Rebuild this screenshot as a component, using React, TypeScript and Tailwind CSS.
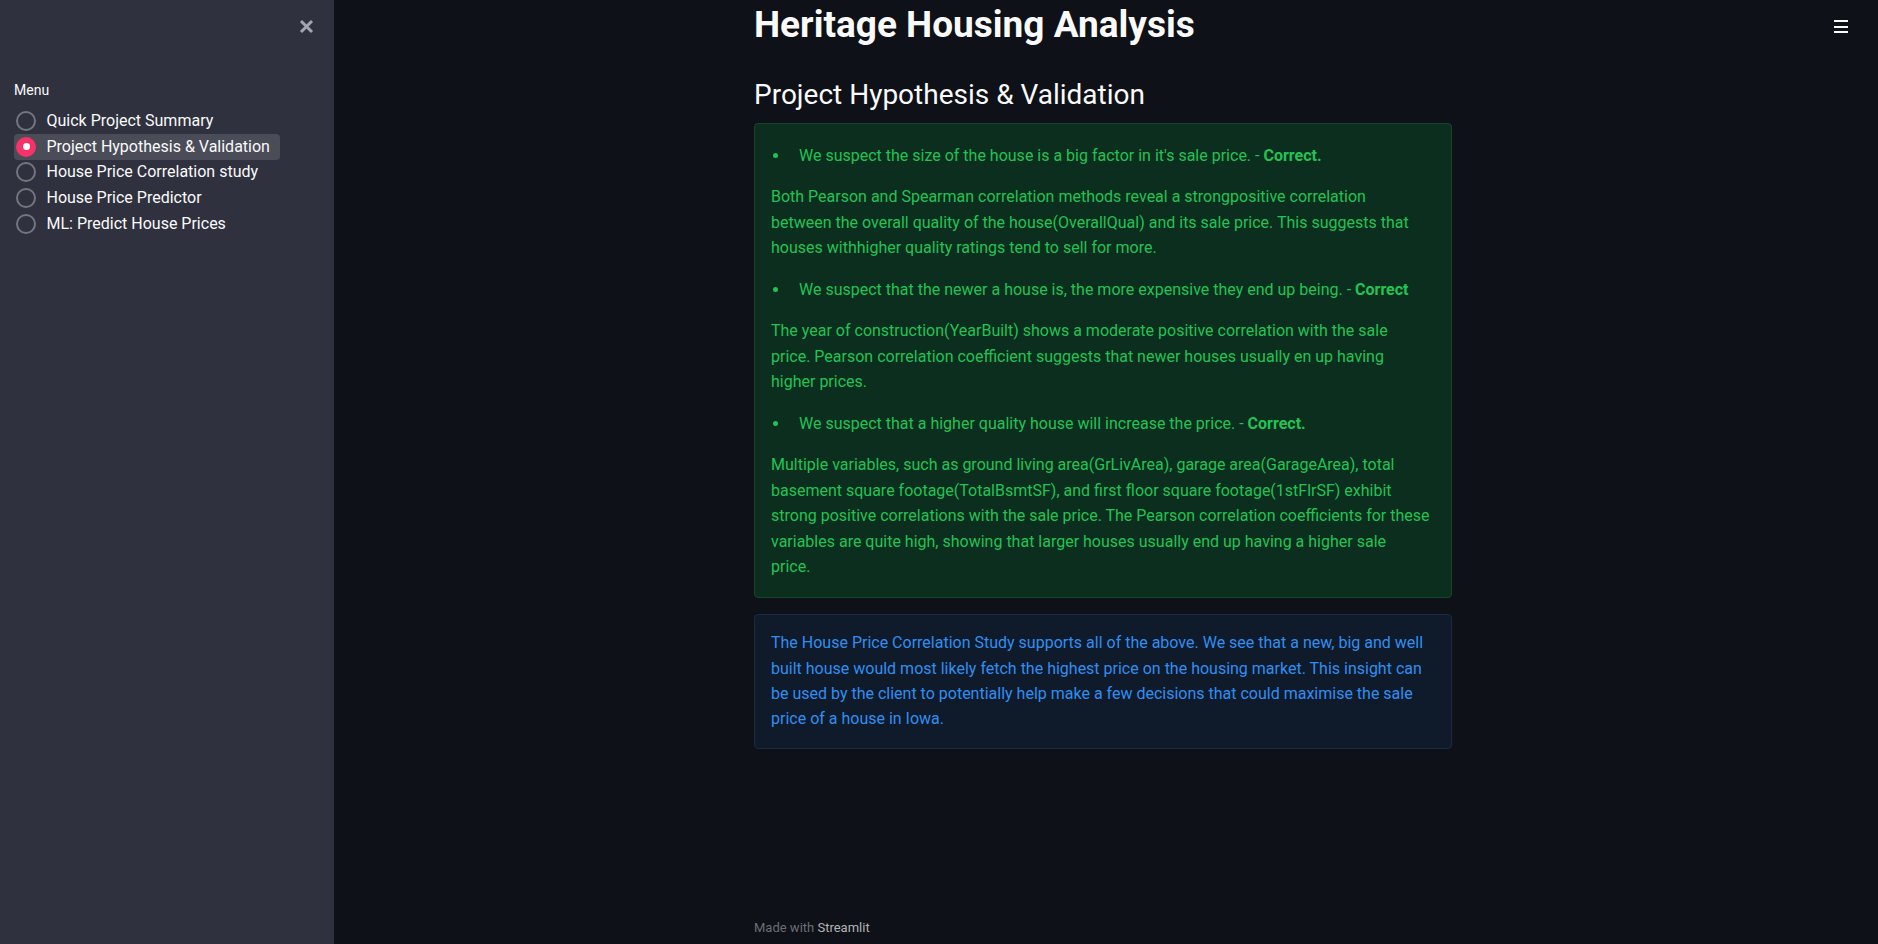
import React from "react";

const menu = [
  "Quick Project Summary",
  "Project Hypothesis & Validation",
  "House Price Correlation study",
  "House Price Predictor",
  "ML: Predict House Prices",
];

function Lines({ lines }: { lines: string[] }) {
  return (
    <p className="whitespace-nowrap">
      {lines.map((l, i) => (
        <React.Fragment key={i}>
          {l}
          {i < lines.length - 1 && <br />}
        </React.Fragment>
      ))}
    </p>
  );
}

function Bullet({ children }: { children: React.ReactNode }) {
  return (
    <ul className="list-none">
      <li className="flex items-center whitespace-nowrap">
        <span className="ml-[2px] mr-[21px] h-[5px] w-[5px] rounded-full bg-[#21c354]" />
        <span>{children}</span>
      </li>
    </ul>
  );
}

export default function App() {
  return (
    <div className="flex h-[944px] w-full overflow-hidden bg-[#0e1117] font-['Roboto',sans-serif] text-[#fafafa]">
      <aside className="flex w-[334px] shrink-0 flex-col bg-[#2f313e]">
        <div className="flex h-[52px] items-center justify-end pr-[20px]">
          <svg width="15" height="15" viewBox="0 0 15 15">
            <path d="M2 2 L13 13 M13 2 L2 13" stroke="#a3a6b0" strokeWidth="3" />
          </svg>
        </div>
        <div className="mt-[28px] px-[14px] text-[14px] leading-[20px]">Menu</div>
        <div className="mt-[8.5px] flex flex-col pl-[14px]">
          {menu.map((m, i) => {
            const sel = i === 1;
            return (
              <div
                key={m}
                className={
                  "flex h-[25.6px] items-center rounded-[4px] pl-[2px] text-[16px] " +
                  (sel ? "w-[266px] bg-[#4a4c58]" : "w-fit")
                }
              >
                {sel ? (
                  <span className="flex h-[20px] w-[20px] items-center justify-center rounded-full bg-[#f63366]">
                    <span className="h-[7px] w-[7px] rounded-full bg-white" />
                  </span>
                ) : (
                  <span className="h-[20px] w-[20px] rounded-full border-2 border-[#74767f]" />
                )}
                <span className="ml-[10.5px]">{m}</span>
              </div>
            );
          })}
        </div>
      </aside>

      <main className="relative flex flex-1 flex-col">
        <button className="absolute right-[30px] top-[20px] flex w-[14px] flex-col gap-[3.5px]">
          <span className="h-[2px] w-[14px] bg-[#fafafa]" />
          <span className="h-[2px] w-[14px] bg-[#fafafa]" />
          <span className="h-[2px] w-[14px] bg-[#fafafa]" />
        </button>
        <div className="ml-[420px] w-[698px]">
          <h1 className="pt-[3px] text-[37px] font-bold leading-[1.2]">Heritage Housing Analysis</h1>
          <h2 className="mt-[31px] text-[28px] font-normal leading-[1.2]">Project Hypothesis &amp; Validation</h2>
          <div className="mt-[11px] flex flex-col gap-[16px] rounded-[4px] border border-[#14462a] bg-[#0c2e1e] px-[16px] pb-[17px] pt-[19px] text-[16px] leading-[25.5px] text-[#21c354]">
            <Bullet>
              We suspect the size of the house is a big factor in it's sale price. - <b>Correct.</b>
            </Bullet>
            <Lines
              lines={[
                "Both Pearson and Spearman correlation methods reveal a strongpositive correlation",
                "between the overall quality of the house(OverallQual) and its sale price. This suggests that",
                "houses withhigher quality ratings tend to sell for more.",
              ]}
            />
            <Bullet>
              We suspect that the newer a house is, the more expensive they end up being. - <b>Correct</b>
            </Bullet>
            <Lines
              lines={[
                "The year of construction(YearBuilt) shows a moderate positive correlation with the sale",
                "price. Pearson correlation coefficient suggests that newer houses usually en up having",
                "higher prices.",
              ]}
            />
            <Bullet>
              We suspect that a higher quality house will increase the price. - <b>Correct.</b>
            </Bullet>
            <Lines
              lines={[
                "Multiple variables, such as ground living area(GrLivArea), garage area(GarageArea), total",
                "basement square footage(TotalBsmtSF), and first floor square footage(1stFlrSF) exhibit",
                "strong positive correlations with the sale price. The Pearson correlation coefficients for these",
                "variables are quite high, showing that larger houses usually end up having a higher sale",
                "price.",
              ]}
            />
          </div>
          <div className="mt-[16px] rounded-[4px] border border-[#1a2a42] bg-[#0f1a2b] px-[16px] pb-[16px] pt-[15.5px] text-[16px] leading-[25.3px] text-[#2f8ff0]">
            <Lines
              lines={[
                "The House Price Correlation Study supports all of the above. We see that a new, big and well",
                "built house would most likely fetch the highest price on the housing market. This insight can",
                "be used by the client to potentially help make a few decisions that could maximise the sale",
                "price of a house in Iowa.",
              ]}
            />
          </div>
        </div>
        <div className="ml-[420px] mt-auto pb-[8px] text-[13px] leading-[16px]">
          <span className="text-[#6d6e73]">Made with </span>
          <span className="text-[#b2b3b6]">Streamlit</span>
        </div>
      </main>
    </div>
  );
}
